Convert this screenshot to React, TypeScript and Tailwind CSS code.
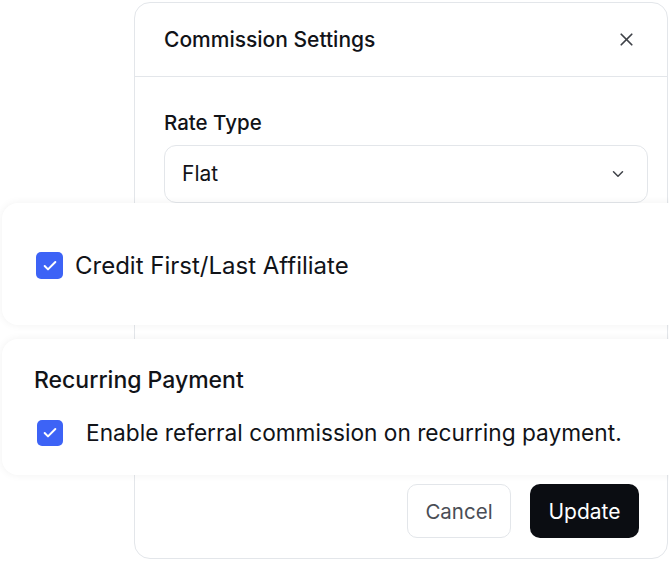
import React from 'react';
import { Check, ChevronDown, X } from 'lucide-react';

const font = { fontFamily: 'Inter, "Noto Sans", sans-serif' };

const Box = ({ size }: { size: string }) => (
  <span className={`${size} flex items-center justify-center rounded-[5px] bg-[#3d63f6] shrink-0`}>
    <Check className="w-[16px] h-[16px] text-white" strokeWidth={3} />
  </span>
);

export default function App() {
  return (
    <div className="relative w-[669px] h-[561px] overflow-hidden bg-white text-[#111318]" style={font}>
      {/* modal behind */}
      <div className="ml-[134px] mt-[2px] w-[534px] h-[557px] rounded-[16px] border border-[#e3e6ea] bg-white flex flex-col">
        <div className="h-[74px] flex items-center justify-between pl-[29px] pr-[30px] border-b border-[#e3e6ea]">
          <span className="text-[21px] font-medium leading-[28px] pt-[1px]">Commission Settings</span>
          <X className="w-[21px] h-[21px] text-[#3f4248]" strokeWidth={2} />
        </div>
        <div className="pl-[29px] pt-[32px] flex flex-col gap-[8px]">
          <span className="text-[20.5px] font-medium leading-[28px]">Rate Type</span>
          <div className="w-[484px] h-[58px] rounded-[12px] border border-[#e3e6ea] flex items-center justify-between pl-[17px] pr-[20px]">
            <span className="text-[21px]">Flat</span>
            <ChevronDown className="w-[18px] h-[18px] text-[#3f4248]" strokeWidth={2} />
          </div>
        </div>
        <div className="mt-auto flex justify-end gap-[19px] pr-[28px] pb-[20px]">
          <button className="w-[104px] h-[54px] pt-[2px] rounded-[10px] border border-[#e3e6ea] text-[20.5px] text-[#4a4d55] bg-white">Cancel</button>
          <button className="w-[109px] h-[54px] pt-[2px] rounded-[10px] bg-[#0b0d12] text-[21px] text-white">Update</button>
        </div>
      </div>

      {/* overlay card 1 */}
      <div className="absolute left-[2px] top-[203px] w-[700px] h-[122px] rounded-[16px] bg-white shadow-[0_0_8px_rgba(0,0,0,0.06)] flex items-center pl-[34px] pt-[3px] gap-[12px]">
        <Box size="w-[27px] h-[27px]" />
        <span className="text-[24px] leading-[30px]">Credit First/Last Affiliate</span>
      </div>

      {/* overlay card 2 */}
      <div className="absolute left-[2px] top-[339px] w-[700px] h-[136px] rounded-[16px] bg-white shadow-[0_0_8px_rgba(0,0,0,0.06)] flex flex-col pl-[32px] pt-[26px] gap-[23px]">
        <span className="text-[23px] font-medium leading-[30px]">Recurring Payment</span>
        <div className="flex items-center gap-[23px] pl-[3px]">
          <Box size="w-[26px] h-[26px]" />
          <span className="text-[22.7px] leading-[30px]">Enable referral commission on recurring payment.</span>
        </div>
      </div>
    </div>
  );
}
